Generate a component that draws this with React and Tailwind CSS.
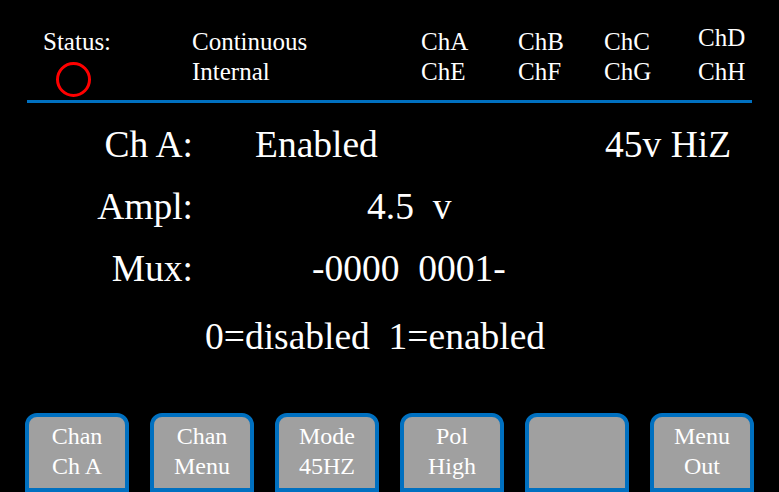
const buttons = [
  ["Chan", "Ch A"],
  ["Chan", "Menu"],
  ["Mode", "45HZ"],
  ["Pol", "High"],
  ["", ""],
  ["Menu", "Out"],
];

function SoftKey({ top, bottom }) {
  return (
    <div className="w-[104px] h-[79px] shrink-0 border-4 border-[#0070c0] rounded-t-[12px] bg-[#a0a0a0] text-white text-[24px] leading-[30px] text-center pt-[4px]">
      <div>{top || "\u00a0"}</div>
      <div>{bottom || "\u00a0"}</div>
    </div>
  );
}

export default function App() {
  return (
    <div className="w-[779px] h-[492px] bg-black text-white overflow-hidden flex flex-col font-['Liberation_Serif','Times_New_Roman',serif]">
      {/* status header */}
      <div className="h-[100px] pt-[27px] pl-[43px] flex text-[25px] leading-[30px]">
        <div className="w-[149px] flex flex-col">
          <div>Status:</div>
          <div className="w-[35px] h-[35px] ml-[13px] mt-[5px] rounded-full border-[3px] border-[#ff0000]" />
        </div>
        <div className="w-[229px]">
          <div>Continuous</div>
          <div>Internal</div>
        </div>
        <div className="w-[97px]">
          <div>ChA</div>
          <div>ChE</div>
        </div>
        <div className="w-[86px]">
          <div>ChB</div>
          <div>ChF</div>
        </div>
        <div className="w-[94px]">
          <div>ChC</div>
          <div>ChG</div>
        </div>
        <div>
          <div className="-mt-[4px] mb-[4px]">ChD</div>
          <div>ChH</div>
        </div>
      </div>
      <div className="ml-[27px] w-[725px] h-[3px] bg-[#0070c0]" />

      {/* channel settings */}
      <div className="mt-[11px] text-[37.5px] leading-[62px] whitespace-pre">
        <div className="flex">
          <div className="w-[193px] text-right">Ch A:</div>
          <div className="ml-[62px] w-[350px]">Enabled</div>
          <div>45v HiZ</div>
        </div>
        <div className="flex">
          <div className="w-[193px] text-right">Ampl:</div>
          <div className="ml-[174px]">4.5  v</div>
        </div>
        <div className="flex">
          <div className="w-[193px] text-right">Mux:</div>
          <div className="ml-[119px]">-0000  0001-</div>
        </div>
        <div className="mt-[6px] pl-[205px]">0=disabled  1=enabled</div>
      </div>

      {/* soft keys */}
      <div className="mt-auto flex gap-[21px] pl-[25px]">
        {buttons.map(([t, b], i) => (
          <SoftKey key={i} top={t} bottom={b} />
        ))}
      </div>
    </div>
  );
}
